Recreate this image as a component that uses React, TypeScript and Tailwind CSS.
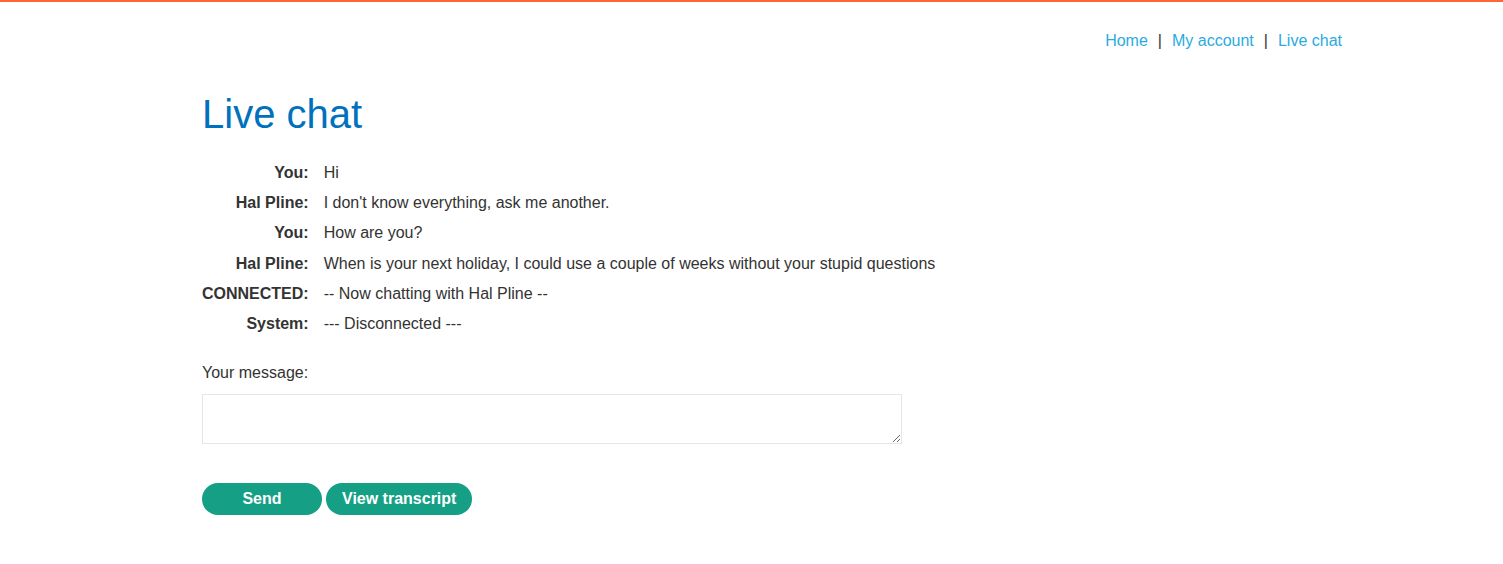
import React from "react";

const rows: [string, string][] = [
  ["You:", "Hi"],
  ["Hal Pline:", "I don't know everything, ask me another."],
  ["You:", "How are you?"],
  ["Hal Pline:", "When is your next holiday, I could use a couple of weeks without your stupid questions"],
  ["CONNECTED:", "-- Now chatting with Hal Pline --"],
  ["System:", "--- Disconnected ---"],
];

export default function App() {
  return (
    <div className="min-h-[564px] bg-white border-t-2 border-[#ff6633] text-[#333332] text-[16px]" style={{ fontFamily: '"Liberation Sans", Arial, sans-serif' }}>
      <div className="w-[1140px] ml-[202px]">
        <nav className="flex justify-end items-center pt-[28px] h-[50px] leading-[20px]">
          <a className="text-[#29abe0]">Home</a>
          <span className="mx-[10px]">|</span>
          <a className="text-[#29abe0]">My account</a>
          <span className="mx-[10px]">|</span>
          <a className="text-[#29abe0]">Live chat</a>
        </nav>
        <h1 className="text-[40px] leading-[50px] text-[#0071bc] mt-[37px]">Live chat</h1>
        <div className="grid grid-cols-[auto_1fr] auto-rows-[30.2px] items-center gap-x-[15px] mt-[19px]">
          {rows.map(([l, t], i) => (
            <React.Fragment key={i}>
              <div className="font-bold text-right">{l}</div>
              <div>{t}</div>
            </React.Fragment>
          ))}
        </div>
        <div className="mt-[24px] leading-[20px]">Your message:</div>
        <textarea className="block mt-[11px] w-[700px] h-[50px] border border-[#e6e6e6] bg-white" />
        <div className="flex gap-[4px] mt-[39px]">
          <button className="w-[120px] h-[32px] rounded-[25px] bg-[#159f84] text-white font-bold">Send</button>
          <button className="px-[16px] h-[32px] rounded-[25px] bg-[#159f84] text-white font-bold">View transcript</button>
        </div>
      </div>
    </div>
  );
}
